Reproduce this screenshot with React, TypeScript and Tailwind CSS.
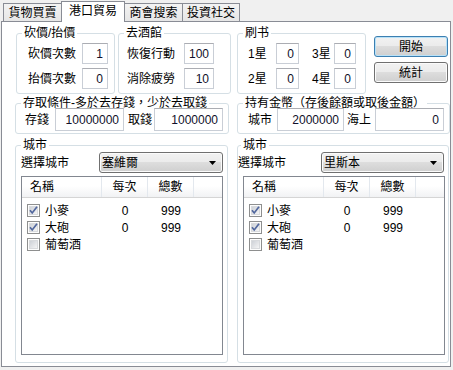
import clsx from "clsx";
import type { ReactNode } from "react";

const GRAY_FILL = "bg-[linear-gradient(#f2f2f2,#ebebeb_50%,#dddddd_50%,#cfcfcf)]";

function Group({
  title,
  className,
  titleClass,
  children,
}: {
  title: string;
  className?: string;
  titleClass?: string;
  children?: ReactNode;
}) {
  return (
    <div className={clsx("flex flex-col rounded-[3px] border border-[#d5dfe5]", className)}>
      <div className={clsx("-mt-[8px] w-fit bg-white px-[2px] leading-[14px]", titleClass ?? "ml-[5px]")}>
        {title}
      </div>
      {children}
    </div>
  );
}

function TextBox({ value, className }: { value: string; className?: string }) {
  return (
    <div
      className={clsx(
        "flex items-center justify-end border border-[#c9ced6] border-t-[#abadb3] bg-white pr-[4px] text-[#10102a]",
        className
      )}
    >
      {value}
    </div>
  );
}

function WinButton({ label, focused }: { label: string; focused?: boolean }) {
  return (
    <div
      className={clsx(
        "flex h-[21px] items-center justify-center rounded-[3px] border",
        GRAY_FILL,
        focused
          ? "border-[#3c7fb1] shadow-[inset_0_0_0_1px_#b9e2f8]"
          : "border-[#707070] shadow-[inset_0_0_0_1px_#fbfbfb]"
      )}
    >
      {label}
    </div>
  );
}

function Combo({ value, className }: { value: string; className?: string }) {
  return (
    <div
      className={clsx(
        "flex h-[21px] items-center justify-between rounded-[3px] border border-[#707070] pl-[2px] pr-[6px] shadow-[inset_0_0_0_1px_#fbfbfb]",
        GRAY_FILL,
        className
      )}
    >
      <span>{value}</span>
      <svg width="7" height="4" viewBox="0 0 7 4">
        <path d="M0 0h7L3.5 4z" fill="#000" />
      </svg>
    </div>
  );
}

function CheckBox({ checked }: { checked?: boolean }) {
  return (
    <svg width="13" height="13" viewBox="0 0 13 13" className="shrink-0">
      <defs>
        <linearGradient id="cbfill" x1="0" y1="0" x2="1" y2="1">
          <stop offset="0" stopColor="#cbcfd5" />
          <stop offset="1" stopColor="#f7f7f7" />
        </linearGradient>
      </defs>
      <rect x="0.5" y="0.5" width="12" height="12" fill="#fdfdfd" stroke="#8e8f8f" />
      <rect x="2.5" y="2.5" width="8" height="8" fill="url(#cbfill)" stroke="#d8dadd" />
      {checked && (
        <path d="M3 6.3l2.2 2.7L10 2.8" stroke="#51679e" strokeWidth="1.7" fill="none" />
      )}
    </svg>
  );
}

const goods = [
  { name: "小麥", each: "0", total: "999", checked: true },
  { name: "大砲", each: "0", total: "999", checked: true },
  { name: "葡萄酒", each: "", total: "", checked: false },
];

function GoodsList() {
  return (
    <div className="mt-[3px] h-[179px] w-[202px] border border-[#828790] bg-white">
      <div className="flex h-[21px] border-b border-[#d5d5d5] bg-[linear-gradient(#ffffff,#ffffff_45%,#f1f2f4)]">
        <div className="flex w-[80px] items-center border-r border-[#e3e8ee] pl-[8px]">名稱</div>
        <div className="flex w-[46px] items-center justify-center border-r border-[#e3e8ee]">每次</div>
        <div className="flex w-[46px] items-center justify-center border-r border-[#e3e8ee]">總數</div>
      </div>
      <div className="pt-[4px]">
        {goods.map((g) => (
          <div key={g.name} className="flex h-[17px] items-center">
            <div className="flex w-[80px] items-center gap-[5px] pl-[5px]">
              <CheckBox checked={g.checked} />
              <span>{g.name}</span>
            </div>
            <div className="w-[46px] text-center">{g.each}</div>
            <div className="w-[46px] text-center">{g.total}</div>
          </div>
        ))}
      </div>
    </div>
  );
}

export default function App() {
  const tabs = ["貨物買賣", "港口貿易", "商會搜索", "投資社交"];
  const widths = ["w-[59px]", "w-[64px]", "w-[59px]", "w-[58px]"];

  return (
    <div className="h-[370px] w-[453px] overflow-hidden bg-[#f0f0f0] font-['Liberation_Sans','Noto_Sans_CJK_TC',sans-serif] text-[12px] text-black">
      {/* tabs */}
      <div className="flex h-[21px] items-end pl-[3px]">
        {tabs.map((t, i) =>
          i === 1 ? (
            <div
              key={t}
              className="relative z-10 -mb-px -ml-px flex h-[21px] w-[64px] items-center justify-center border border-b-0 border-[#898c95] bg-white pb-[2px]"
            >
              {t}
            </div>
          ) : (
            <div
              key={t}
              className={clsx(
                "flex h-[18px] items-center justify-center border border-b-0 border-[#898c95] bg-[linear-gradient(#f3f3f3,#e6e6e6)] pt-[1px]",
                widths[i],
                i > 0 && "-ml-px"
              )}
            >
              {t}
            </div>
          )
        )}
      </div>

      {/* page */}
      <div className="ml-[1px] h-[346px] w-[450px] border border-[#898c95] bg-white">
        <div className="ml-[14px] mt-[11px] flex items-start">
          <Group title="砍價/抬價" className="h-[61px] w-[99px]">
            <div className="flex flex-col gap-[4px] pl-[11px] pt-[3px]">
              <div className="flex h-[21px] items-center">
                <span className="w-[54px]">砍價次數</span>
                <TextBox value="1" className="h-[21px] w-[26px]" />
              </div>
              <div className="flex h-[21px] items-center">
                <span className="w-[54px]">抬價次數</span>
                <TextBox value="0" className="h-[21px] w-[26px]" />
              </div>
            </div>
          </Group>
          <Group title="去酒館" className="ml-[3px] h-[61px] w-[113px]">
            <div className="flex flex-col gap-[4px] pl-[8px] pt-[3px]">
              <div className="flex h-[21px] items-center">
                <span className="w-[57px]">恢復行動</span>
                <TextBox value="100" className="h-[21px] w-[30px]" />
              </div>
              <div className="flex h-[21px] items-center">
                <span className="w-[57px]">消除疲勞</span>
                <TextBox value="10" className="h-[21px] w-[30px]" />
              </div>
            </div>
          </Group>
          <Group title="刷书" className="ml-[6px] h-[61px] w-[129px]">
            <div className="flex flex-col gap-[4px] pl-[10px] pt-[3px]">
              <div className="flex h-[21px] items-center">
                <span className="w-[28px]">1星</span>
                <TextBox value="0" className="h-[21px] w-[23px]" />
                <span className="ml-[13px] w-[22px]">3星</span>
                <TextBox value="0" className="h-[21px] w-[22px]" />
              </div>
              <div className="flex h-[21px] items-center">
                <span className="w-[28px]">2星</span>
                <TextBox value="0" className="h-[21px] w-[23px]" />
                <span className="ml-[13px] w-[22px]">4星</span>
                <TextBox value="0" className="h-[21px] w-[22px]" />
              </div>
            </div>
          </Group>
          <div className="ml-[8px] mt-[3px] flex w-[74px] flex-col gap-[5px]">
            <WinButton label="開始" focused />
            <WinButton label="統計" />
          </div>
        </div>

        <div className="ml-[13px] mt-[9px] flex items-start">
          <Group title="存取條件-多於去存錢，少於去取錢" className="h-[31px] w-[214px]">
            <div className="-mt-[2px] flex items-center pl-[9px]">
              <span className="w-[30px]">存錢</span>
              <TextBox value="10000000" className="h-[23px] w-[69px]" />
              <span className="ml-[4px] w-[26px]">取錢</span>
              <TextBox value="1000000" className="h-[23px] w-[69px]" />
            </div>
          </Group>
          <Group title="持有金幣（存後餘額或取後金額）" className="ml-[8px] h-[31px] w-[213px]">
            <div className="-mt-[2px] flex items-center pl-[10px]">
              <span className="w-[29px]">城市</span>
              <TextBox value="2000000" className="h-[23px] w-[67px]" />
              <span className="ml-[3px] w-[28px]">海上</span>
              <TextBox value="0" className="h-[23px] w-[69px]" />
            </div>
          </Group>
        </div>

        <div className="ml-[13px] mt-[11px] flex items-start">
          <Group title="城市" className="h-[218px] w-[213px]">
            <div className="flex flex-col pl-[5px]">
              <div className="flex items-center">
                <span className="w-[78px]">選擇城市</span>
                <Combo value="塞維爾" className="w-[124px]" />
              </div>
              <GoodsList />
            </div>
          </Group>
          <Group title="城市" titleClass="ml-[3px]" className="ml-[9px] h-[218px] w-[212px]">
            <div className="flex flex-col">
              <div className="flex items-center">
                <span className="w-[83px]">選擇城市</span>
                <Combo value="里斯本" className="w-[123px]" />
              </div>
              <div className="pl-[5px]">
                <GoodsList />
              </div>
            </div>
          </Group>
        </div>
      </div>
    </div>
  );
}
